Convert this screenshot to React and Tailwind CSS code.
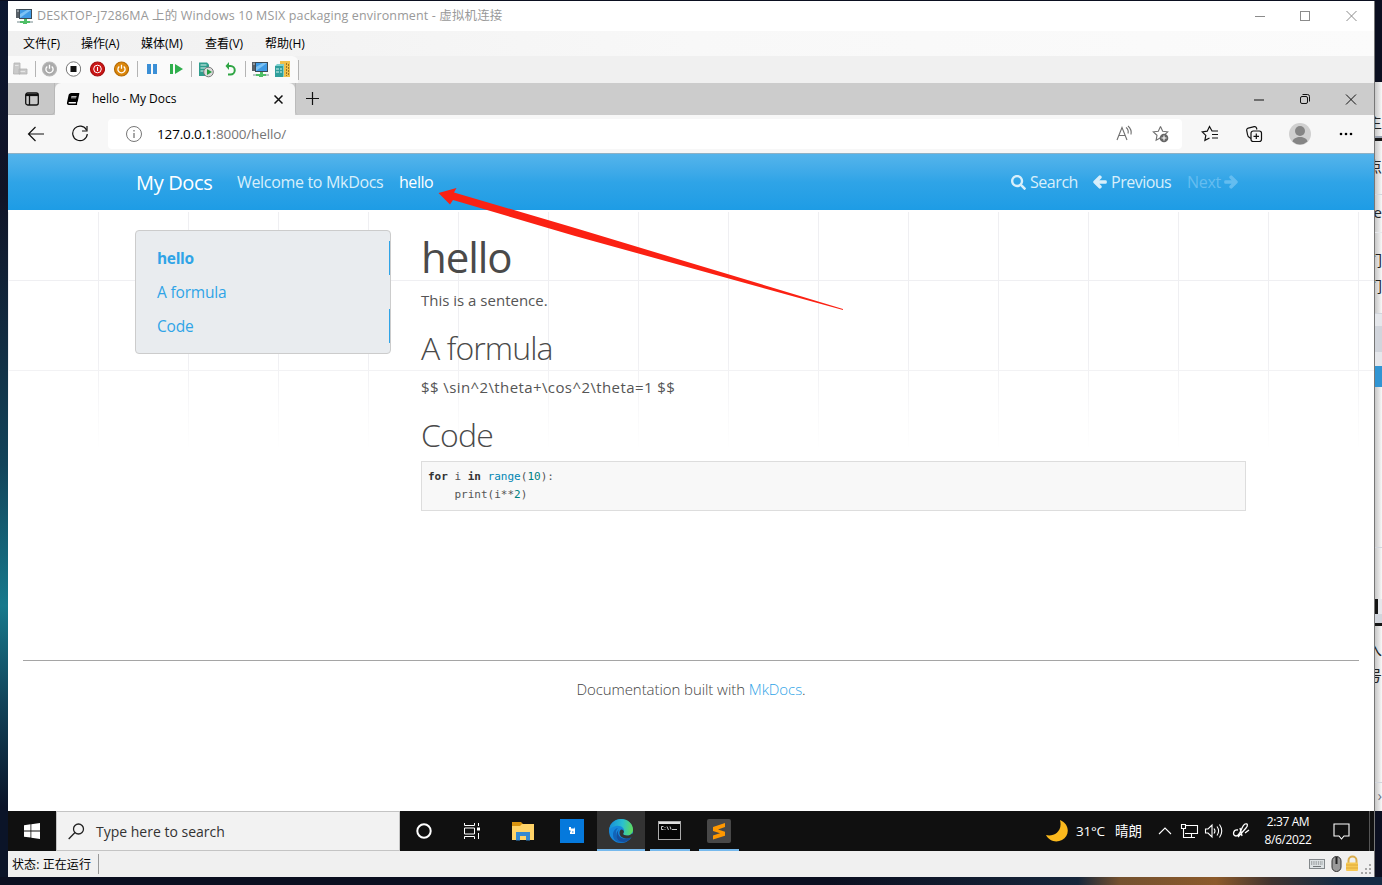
import React from 'react';
import { FaSearch, FaArrowLeft, FaArrowRight, FaBook } from 'react-icons/fa';

const menus = [
  { label: '文件(F)', width: 'w-[58px]' },
  { label: '操作(A)', width: 'w-[60px]' },
  { label: '媒体(M)', width: 'w-[64px]' },
  { label: '查看(V)', width: 'w-[60px]' },
  { label: '帮助(H)', width: 'w-[60px]' },
];

// pieces of the page that is open behind the virtual machine window
const behind = [
  { h: 'h-[28px]', text: '', style: '' },
  { h: 'h-[26px]', text: '主', style: '' },
  { h: 'h-[2px]', text: '', style: 'bg-gray-400' },
  { h: 'h-[3px]', text: '', style: 'bg-[#151515]' },
  { h: 'h-[13px]', text: '', style: '' },
  { h: 'h-[26px]', text: '点', style: '' },
  { h: 'h-[15px]', text: '', style: 'border-b border-gray-300' },
  { h: 'h-[38px]', text: 'Se', style: 'border-b border-gray-200 pt-[5px]' },
  { h: 'h-[15px]', text: '', style: '' },
  { h: 'h-[26px]', text: '们', style: '' },
  { h: 'h-[26px]', text: '们', style: '' },
  { h: 'h-[14px]', text: '', style: 'border-b border-gray-300' },
  { h: 'h-[12px]', text: '', style: 'bg-gray-200' },
  { h: 'h-[26px]', text: '', style: 'bg-gray-300' },
  { h: 'h-[14px]', text: '', style: 'bg-gray-200' },
  { h: 'h-[21px]', text: '', style: 'bg-[#3195d3]' },
  { h: 'h-[161px]', text: '', style: 'border-b border-gray-300' },
  { h: 'h-[51px]', text: '', style: '' },
  { h: 'h-[15px]', text: '', style: 'border-l-[3px] border-[#151515] bg-gray-200' },
  { h: 'h-[9px]', text: '', style: 'bg-gray-300' },
  { h: 'h-[3px]', text: '', style: 'bg-[#151515]' },
  { h: 'h-[11px]', text: '', style: '' },
  { h: 'h-[26px]', text: '入', style: '' },
  { h: 'h-[26px]', text: '号', style: '' },
  { h: 'h-[94px]', text: '', style: 'border-b border-gray-300' },
  { h: 'h-[28px]', text: '›', style: 'text-gray-500' },
];

function Computer() {
  return (
    <svg width="17" height="17" viewBox="0 0 17 17">
      <rect x="0" y="1" width="5" height="9" fill="#596168" />
      <rect x="1" y="2.5" width="3" height="1" fill="#c8d0d6" />
      <rect x="3" y="1" width="13" height="10" fill="#3c4a55" />
      <rect x="4" y="2" width="11" height="8" fill="#3f9be6" />
      <path d="M4 10V6l7-4h4z" fill="#7cc3f5" />
      <path d="M8 11h3v2h4v2h-4v1H7v-1H4v-2h4z" fill="#4fbf67" />
      <rect x="1" y="13" width="3" height="2" fill="#b9c4c6" />
      <rect x="14" y="13" width="3" height="2" fill="#b9c4c6" />
    </svg>
  );
}

function Power({ fill, ring, dark }) {
  return (
    <svg width="16" height="16" viewBox="0 0 16 16" fill="none">
      <circle cx="8.500" cy="8" r="7" fill={fill} stroke={dark} strokeWidth="1.200" />
      {ring ? (
        <>
          <circle cx="8.500" cy="8" r="3.800" stroke="#fff" />
          <path d="M8.500 6v4" stroke="#fff" strokeWidth="1.100" />
        </>
      ) : (
        <path d="M8.500 3.800v4M6.300 5.400a3.600 3.600 0 1 0 4.400 0" stroke="#fff" strokeWidth="1.300" />
      )}
    </svg>
  );
}

function Divider({ className }) {
  return <div className={`w-px shrink-0 bg-[#b4b4b4] ${className}`} />;
}

function TitleBar() {
  return (
    <div className="flex h-[30px] items-center bg-white pl-2 text-[#999]">
      <Computer />
      <span className="ml-1 grow whitespace-nowrap text-[12.500px] tracking-[0.13px]">
        DESKTOP-J7286MA 上的 Windows 10 MSIX packaging environment - 虚拟机连接
      </span>
      <svg width="110" height="12" viewBox="0 0 110 12" fill="none" stroke="#8b8b8b" className="mr-[14px] -mt-px">
        <path d="M5 6.500h10M96.500 1l10 10M106.500 1l-10 10" />
        <rect x="50.500" y="1.500" width="9" height="9" />
      </svg>
    </div>
  );
}

function MenuBar() {
  return (
    <div className="flex h-[25px] items-center bg-gradient-to-r from-[#f0f0f0] via-[#f8f8f8] to-[#fbfbfb] pl-[15px] text-[12px] text-black">
      {menus.map((m) => (
        <span key={m.label} className={`${m.width} whitespace-nowrap tracking-[-0.05px]`}>{m.label}</span>
      ))}
    </div>
  );
}

function Toolbar() {
  return (
    <div className="flex h-[27px] items-center bg-[#f0f0f0]">
      <div className="flex h-full w-[290px] items-center rounded-tr-md bg-[#fafafa] pb-px pl-1">
        <svg width="17" height="14" viewBox="0 0 17 14" fill="#cacaca" stroke="#b3b3b3" strokeWidth=".8">
          <path d="M2 1h6v11H1.500zM7 7h8v5H7z" />
          <path d="M3 3.500h3.500M8.500 9.500H13" stroke="#eee" />
        </svg>
        <Divider className="ml-[6px] h-4" />
        <div className="ml-[5px] flex gap-2">
          <Power fill="#aaa" dark="#b8b8b8" />
          <svg width="16" height="16" viewBox="0 0 16 16">
            <circle cx="8.500" cy="8" r="7.200" fill="#fff" stroke="#777" />
            <rect x="5.500" y="5" width="6" height="6" fill="#111" />
          </svg>
          <Power fill="#cb1616" dark="#a51111" ring />
          <Power fill="#dc870c" dark="#b66b04" />
        </div>
        <Divider className="ml-2 h-4" />
        <svg width="38" height="12" viewBox="0 0 38 12" className="ml-[9px]">
          <path d="M0 1h4v10H0zM6 1h4v10H6z" fill="#3b8fd6" />
          <path d="M23 1h3v10h-3zM28 1l8 5-8 5z" fill="#2fae4c" />
        </svg>
        <Divider className="ml-[6px] h-4" />
        <svg width="40" height="17" viewBox="0 0 40 17" fill="none" className="ml-[7px] shrink-0">
          <path d="M0 1.500h8l2 2V15H0z" fill="#2f9d8d" />
          <path d="M1.500 4h6M1.500 7h6M1.500 10h4" stroke="#d9f4ee" />
          <circle cx="9.500" cy="11" r="4.800" fill="#dcdcdc" stroke="#777" />
          <path d="M8 8l5 3-5 3z" fill="#249c3f" />
          <path d="M29 5h2.500a4 4 0 0 1 0 8.500H29" stroke="#2fa544" strokeWidth="2" />
          <path d="M26.500 5L30 1v8z" fill="#2fa544" />
        </svg>
        <Divider className="ml-[6px] h-4" />
        <div className="ml-[6px] flex gap-1.5">
          <Computer />
          <svg width="17" height="17" viewBox="0 0 17 17">
            <path d="M5 0h10v16H5z" fill="#f0c04a" />
            <path d="M11.500 2v13M13.500 3v12" stroke="#9b7425" strokeDasharray="2 1" />
            <path d="M0 5h8v11H0z" fill="#2f9f9c" />
            <path d="M0 5l2-2h7v12l-1 1V5z" fill="#7fd0ce" />
            <path d="M1 8h3M1 11h3M5 8h2M5 11h2" stroke="#d6f3f1" />
          </svg>
        </div>
      </div>
      <Divider className="h-5" />
    </div>
  );
}

function TabBar() {
  return (
    <div className="flex h-8 bg-[#cccccc] text-black">
      <div className="flex w-[47px] items-center justify-center rounded-br border-r border-b border-[#b8b8b8] bg-[#c8c8c8] pl-0.5">
        <svg width="14" height="14" viewBox="0 0 14 14" fill="none" stroke="#111" strokeWidth="1.300">
          <rect x=".7" y="1" width="12.600" height="12" rx="2" />
          <path d="M4.500 4v9" />
          <path d="M1 3h12" strokeWidth="2.200" />
        </svg>
      </div>
      <div className="flex w-[240px] items-center rounded-t-md bg-[#f7f7f7] pl-3">
        <FaBook className="-skew-x-12 text-[12px]" />
        <span className="ml-[13px] grow whitespace-nowrap text-[12px] tracking-[-0.03px]">hello - My Docs</span>
        <svg width="9" height="9" viewBox="0 0 9 9" stroke="#111" strokeWidth="1.500" className="mr-3">
          <path d="M.5.5l8 8M8.500.5l-8 8" />
        </svg>
      </div>
      <div className="flex grow items-center justify-between rounded-bl border-l border-[#bbb] pl-[9px] pr-[17px] pb-px">
        <svg width="15" height="15" viewBox="0 0 15 15" stroke="#111" strokeWidth="1.200">
          <path d="M7.500 1v13M1 7.500h13" />
        </svg>
        <svg width="104" height="12" viewBox="0 0 104 12" fill="none" stroke="#111">
          <path d="M1 7h10M93 1.500l10 10M103 1.500l-10 10" />
          <rect x="47.500" y="3.500" width="7" height="7" rx="1.500" />
          <path d="M49.500 1.500h5a2 2 0 0 1 2 2v5" />
        </svg>
      </div>
    </div>
  );
}

function AddressBar() {
  return (
    <div className="flex h-[38px] items-center bg-[#f7f7f7]">
      <svg width="66" height="18" viewBox="0 0 66 18" fill="none" stroke="#111" strokeWidth="1.200" className="ml-[19px]">
        <path d="M17 9H1.500M8.500 2l-7 7 7 7" />
        <path d="M59.500 5A7.300 7.300 0 1 0 60.300 9" />
        <path d="M60 1v5h-5" />
      </svg>
      <div className="ml-[15px] flex h-[30px] w-[1074px] items-center rounded bg-white pl-[17px]">
        <svg width="18" height="18" viewBox="0 0 18 18" fill="none" stroke="#777">
          <circle cx="9" cy="9" r="7.500" />
          <path d="M9 8v5M9 5v1.400" strokeWidth="1.300" />
        </svg>
        <span className="ml-[14px] grow whitespace-nowrap text-[13.500px] tracking-[-0.15px] text-[#767676]">
          <span className="text-black">127.0.0.1</span>:8000/hello/
        </span>
        <svg width="54" height="18" viewBox="0 0 54 18" fill="none" stroke="#707070" strokeWidth="1.100" className="mr-[12px]">
          <path d="M1 15L6 2.500 11 15M2.800 10.500h6.400M10 2.500q3 2.300 2 6M12 1q4 3.500 3 8.500" />
          <path d="M44.500 1.500l2.200 4.700 5 .6-3.700 3.500M44.500 1.500l-2.200 4.700-5 .6 3.700 3.500-.9 5 4-2.200" />
          <circle cx="48" cy="13" r="4.300" fill="#666" stroke="none" />
          <path d="M48 10.500v5M45.500 13h5" stroke="#fff" />
        </svg>
      </div>
      <svg width="62" height="18" viewBox="0 0 62 18" fill="none" stroke="#111" strokeWidth="1.200" className="ml-[19px]">
        <path d="M17 6h-6L8.500 1.500 6.200 6.200l-5 .7 3.600 3.500-.9 5 4.600-2.400M11 9.500h6M11 13h6" />
        <path d="M50 13.500l-1.500-1a4 4 0 0 1-2-3l-.8-4a2 2 0 0 1 1.500-2.400l6-1.400a2 2 0 0 1 2.300 1.300l.4 1.500" />
        <rect x="50" y="6" width="10.500" height="10.500" rx="2.200" />
        <path d="M55.300 8.500v5.500M52.500 11.300H58" />
      </svg>
      <svg width="22" height="22" viewBox="0 0 22 22" className="ml-[26px]">
        <circle cx="11" cy="11" r="11" fill="#d0d0d0" />
        <circle cx="11" cy="8" r="5" fill="#858585" />
        <path d="M3.500 18.500c1-6 14-6 15 0a11 11 0 0 1-15 0z" fill="#858585" />
      </svg>
      <svg width="14" height="4" viewBox="0 0 14 4" className="ml-7">
        <circle cx="2" cy="2" r="1.300" />
        <circle cx="7" cy="2" r="1.300" />
        <circle cx="12" cy="2" r="1.300" />
      </svg>
    </div>
  );
}

function NavBar() {
  return (
    <div className="flex h-[57px] shrink-0 items-center border-t border-[#8fb1c5] bg-gradient-to-b from-[#54b4eb] via-[#2fa4e7] to-[#1d9ce5] pl-32 whitespace-nowrap text-[#d8effb]">
      <span className="w-[101px] pt-px text-[20px] tracking-[-0.35px] text-white">My Docs</span>
      <span className="w-[162px] text-[16px] tracking-[-0.32px]">Welcome to MkDocs</span>
      <span className="w-[612px] text-[16px] tracking-[-0.45px] text-white">hello</span>
      <FaSearch className="text-[15px]" />
      <span className="ml-1 w-[63px] text-[16px] tracking-[-0.45px]">Search</span>
      <FaArrowLeft className="text-[14px]" stroke="currentColor" strokeWidth="50" />
      <span className="ml-1 w-[76px] text-[16px] tracking-[-0.5px]">Previous</span>
      <span className="w-[37px] text-[16px] tracking-[-0.3px] text-[#65bdf0]">Next</span>
      <FaArrowRight className="text-[14px] text-[#65bdf0]" stroke="currentColor" strokeWidth="50" />
    </div>
  );
}

function Page() {
  return (
    <div className="relative flex h-[601px] flex-col bg-white text-[15px] text-[#555]">
      <div className="absolute inset-x-0 top-0.5 h-[238px] bg-[linear-gradient(to_right,#efeff2_1px,transparent_1px),linear-gradient(to_bottom,#efeff2_1px,transparent_1px)] bg-size-[90px_90px] bg-position-[0px_68px] [mask-image:linear-gradient(to_bottom,black_60%,transparent)]" />
      <div className="relative flex h-[450px] pt-5 pl-[127px]">
        <div className="flex h-[124px] w-[256px] flex-col rounded border border-[#ccc] bg-[#e9ecef] pt-[10px] text-[15.500px] leading-[34px] tracking-[-0.17px] text-[#2fa4e7]">
          <a className="h-[34px] border-r border-[#2fa4e7] pl-[21px] font-bold tracking-[-0.35px]">hello</a>
          <a className="h-[34px] pl-[21px]">A formula</a>
          <a className="h-[34px] border-r border-[#2fa4e7] pl-[21px]">Code</a>
        </div>
        <div className="ml-[30px] w-[825px]">
          <h1 className="h-[58px] text-[42px] leading-[54px] tracking-[-1.1px] text-[#4a4a4a]">hello</h1>
          <p className="h-[41px] text-[15px] leading-6">This is a sentence.</p>
          <h2 className="h-[46px] text-[32px] leading-[38px] font-light tracking-[-0.9px] text-[#4a4a4a]">A formula</h2>
          <p className="h-[41px] text-[15px] leading-6 tracking-[0.4px]">{'$$ \\sin^2\\theta+\\cos^2\\theta=1 $$'}</p>
          <h2 className="h-[45px] text-[32px] leading-[38px] font-light tracking-[-0.8px] text-[#4a4a4a]">Code</h2>
          <pre className="h-[50px] border border-[#ddd] bg-[#f8f8f8] px-1.5 pt-[6px] font-['DejaVu_Sans_Mono',monospace] text-[11px] leading-[18px] text-[#555]">
            <b className="text-[#333]">for</b> i <b className="text-[#333]">in</b> <span className="text-[#0086b3]">range</span>(<span className="text-[#008080]">10</span>):{'\n'}
            {'    print(i**'}<span className="text-[#008080]">2</span>)
          </pre>
        </div>
      </div>
      <div className="relative mx-[15px] border-t border-[#a5a5a5] pt-4 text-center text-[15px] leading-6 font-light tracking-[-0.07px] text-[#444]">
        Documentation built with <a className="text-[#2fa4e7]">MkDocs</a>.
      </div>
    </div>
  );
}

function TaskBar() {
  return (
    <div className="flex h-10 items-center bg-[#101010] text-white">
      <div className="flex w-12 justify-center">
        <svg width="16" height="16" viewBox="0 0 16 16" fill="#fff">
          <path d="M0 2.300l6.500-1v6.200H0zM7.300 1.200L16 0v7.500H7.300zM0 8.400h6.500v6.200L0 13.700zM7.300 8.400H16V16l-8.700-1.200z" />
        </svg>
      </div>
      <div className="flex h-full w-[344px] items-center border border-[#c4c4c4] bg-[#f2f2f2] pl-[11px] text-[#333]">
        <svg width="17" height="17" viewBox="0 0 17 17" fill="none" stroke="#222" strokeWidth="1.300">
          <circle cx="10.500" cy="6" r="5" />
          <path d="M7 9.500L.7 16" />
        </svg>
        <span className="ml-[11px] whitespace-nowrap text-[14px]">Type here to search</span>
      </div>
      <div className="flex w-12 justify-center">
        <svg width="16" height="16" viewBox="0 0 16 16" fill="none" stroke="#fff" strokeWidth="2">
          <circle cx="8" cy="8" r="6.700" />
        </svg>
      </div>
      <div className="flex w-12 justify-center">
        <svg width="17" height="16" viewBox="0 0 17 16" fill="none" stroke="#fff">
          <path d="M.5 0v2.500h10V0M.5 16v-2.500h10V16M.5 5h10v6H.5zM14.500 0v3M14.500 10v6" />
          <path d="M13 4.500h3v3h-3z" fill="#fff" stroke="none" />
        </svg>
      </div>
      <div className="flex w-[54px] justify-center">
        <svg width="22" height="19" viewBox="0 0 22 19">
          <path d="M0 0h9l2 2v4H0z" fill="#d8930f" />
          <path d="M0 4h8l2-2h12v16H0z" fill="#ffd367" />
          <path d="M4 18.500V10h14v8.500h-4V14H8v4.500z" fill="#3489d1" />
        </svg>
      </div>
      <div className="mr-[3px] flex w-11 justify-center">
        <svg width="24" height="24" viewBox="0 0 24 24">
          <path d="M0 0h24v24H0z" fill="#0579dc" />
          <path d="M9 8h2v1.500h3V8l1 2v5h-5v-2l1-1-2-1z" fill="#fff" />
          <path d="M12 12.500h1.500v1H12z" fill="#0579dc" />
        </svg>
      </div>
      <div className="flex h-full w-12 items-center justify-center border-b-2 border-[#76b9ed] bg-[#333] pt-px">
        <svg width="24" height="24" viewBox="0 0 24 24">
          <defs>
            <linearGradient id="edgeTop" x1="0" y1=".4" x2="1" y2=".5">
              <stop offset="0" stopColor="#178fd9" />
              <stop offset=".55" stopColor="#2bc0cf" />
              <stop offset="1" stopColor="#60dc59" />
            </linearGradient>
          </defs>
          <circle cx="12" cy="12" r="12" fill="#1688dc" />
          <path d="M0 11C1 4 6 0 12 0c7 0 12 5 12 10.500 0 4-3 6-6 6-3 0-4.500-1.300-3.500-2.500C17 10 12 6 7 7 3 7.500 1 9.500 0 11z" fill="url(#edgeTop)" />
          <path d="M9 9c-5 5 0 14 7 14-6 2-12-1-12-7 0-4 2-6.500 5-7z" fill="#1264b8" />
          <path d="M10 10.500c-3 4 1 10 7 9 2 0 4-1 5.500-2-2 5-8 7-12 4.500C6 19 7 13 10 10.500z" fill="#144f9f" />
          <path d="M14.500 14c-1 1.200.5 2.500 3.500 2.500 2 0 4-.7 5.200-2.300l1.300 2.300-2 1.500c-5 3-12 1-12-4 0-2 1-3.500 2-3.500 2 0 3 2 2 3.500z" fill="#333" />
        </svg>
      </div>
      <div className="ml-[5px] flex h-full w-10 items-center justify-center border-b-2 border-[#76b9ed] pr-px">
        <svg width="23" height="19" viewBox="0 0 23 19">
          <rect x=".5" y=".5" width="22" height="18" fill="#050505" stroke="#aaa" />
          <path d="M1 1h21v2H1z" fill="#ddd" />
          <path d="M5.500 5.500h-2v3h2M7 6v.8M7 8v.8M9 5.500l1.500 3.500M12 5.500l1 3M14 8.500h5" fill="none" stroke="#ddd" strokeWidth=".9" />
        </svg>
      </div>
      <div className="ml-[9px] flex h-full w-10 items-center justify-center border-b-2 border-[#76b9ed] pt-0.5">
        <svg width="24" height="24" viewBox="0 0 24 24">
          <rect width="24" height="24" rx="2" fill="#484848" />
          <path d="M18 4v4l-7 2.400 7 2.300v4L6 20.500v-4l7-2.300-7-2.300v-4z" fill="#ff9800" />
        </svg>
      </div>
      <div className="flex grow items-center justify-end whitespace-nowrap">
        <svg width="22" height="22" viewBox="0 0 22 22">
          <path d="M14 0c10 4 10 16 2 20-6 3-13 1-16-5 7 2 17-3 14-15z" fill="#fbb91d" />
        </svg>
        <span className="ml-2 w-[39px] text-[13.500px] tracking-[-0.2px]">31°C</span>
        <span className="w-[43px] text-[13.500px]">晴朗</span>
        <svg width="92" height="18" viewBox="0 0 92 18" fill="none" stroke="#fff" strokeWidth="1.100">
          <path d="M1 12l6-6 6 6" />
          <path d="M27 3.500h12.500v8H27M33.500 11.500v4M29 15.500h8" />
          <path d="M23.500 2.500h4v4h-4zM25.500 6.500v9h5" />
          <path d="M47.500 7h2.500l4-4v12l-4-4h-2.500zM56 6.500q2 2.500 0 5M59 4.500q3.200 4.500 0 9M61.500 2.500q4.500 6.500 0 13" />
          <path d="M80 8c-5-1-6 6-2 6 5 0 5-10 9-12 3-1 3 2 1 4l-8 9M82 6l2 8M91 8l-4 3" strokeWidth="1.300" />
        </svg>
        <div className="ml-[13px] w-[50px] text-center text-[12px] leading-[18px] tracking-[-0.4px]">
          <div>2:37 AM</div>
          <div>8/6/2022</div>
        </div>
        <svg width="17" height="17" viewBox="0 0 17 17" fill="none" stroke="#fff" strokeWidth="1.100" className="mr-[19px] ml-5">
          <path d="M1 1h15v12h-5l-2.500 3L6 13H1z" />
        </svg>
        <div className="mr-1 h-10 w-px bg-[#555]" />
      </div>
    </div>
  );
}

function StatusBar() {
  return (
    <div className="flex h-[26px] items-center bg-[#f0f0f0] pl-1 text-[12px] text-black">
      <span className="w-[86px] pt-px whitespace-nowrap tracking-[0.1px]">状态: 正在运行</span>
      <div className="h-5 w-px bg-[#999]" />
      <div className="grow" />
      <svg width="62" height="20" viewBox="0 0 62 20">
        <rect x=".5" y="5.500" width="15" height="9" fill="#dde2e4" stroke="#83888b" />
        <path d="M2 8h12M2 10h12" stroke="#727779" strokeDasharray="1.300 1" />
        <path d="M4 12.500h8" stroke="#727779" />
        <rect x="23" y="2.500" width="9" height="15" rx="4.500" fill="#999" stroke="#333" />
        <path d="M27.500 3v7" stroke="#222" strokeWidth="2" />
        <path d="M39.500 9V6.500a4 4 0 0 1 8 0V9" fill="none" stroke="#d9ad4d" strokeWidth="2" />
        <rect x="37" y="8.500" width="12" height="8.500" rx="1" fill="#f6c955" />
        <path d="M37 11h12M37 14h12" stroke="#e0aa39" />
        <path d="M60 10h2v2h-2zM60 14h2v2h-2zM60 18h2v2h-2zM56 14h2v2h-2zM56 18h2v2h-2zM52 18h2v2h-2z" fill="#a7a7a7" />
      </svg>
      <div className="w-[3px]" />
    </div>
  );
}

export default function App() {
  return (
    <div className="relative flex h-[885px] w-[1382px] flex-col overflow-hidden bg-[#0b0f20] pt-px font-['Open_Sans','Noto_Sans_CJK_SC',sans-serif]">
      <div className="flex h-[876px]">
        <div className="w-2 shrink-0 bg-[linear-gradient(to_bottom,#0c1730_0%,#101326_22%,#122b40_38%,#12445a_53%,#17798c_69%,#12445a_80%,#0b1428_92%)]" />
        <div className="flex w-[1366px] shrink-0 flex-col">
          <TitleBar />
          <MenuBar />
          <Toolbar />
          <TabBar />
          <AddressBar />
          <NavBar />
          <Page />
          <TaskBar />
          <StatusBar />
        </div>
        <div className="w-2 shrink-0 overflow-hidden border-l border-[#777] pt-[81px]">
          <div className="h-[729px] bg-gradient-to-r from-[#c8c8c8] to-[#f8f8f8] text-[15px] leading-6 text-[#222]">
            {behind.map((b, i) => (
              <div key={i} className={`flex w-[7px] justify-end overflow-hidden ${b.h} ${b.style}`}>{b.text}</div>
            ))}
          </div>
        </div>
      </div>
      <div className="h-2 bg-[linear-gradient(to_right,#0b0f20_0%,#0b0f20_60%,#17263b_78%,#74512f_81%,#8c5a2b_88%,#40332f_92%,#142a43_97%)]" />
      <svg width="410" height="125" viewBox="0 0 410 125" className="absolute top-[187px] left-[436px]">
        <path d="M2.500 6L20.500 1l-2.500 4.500L139 41l268 81v1L139 49 17 13l-3 4.500z" fill="#fb2113" />
      </svg>
    </div>
  );
}
